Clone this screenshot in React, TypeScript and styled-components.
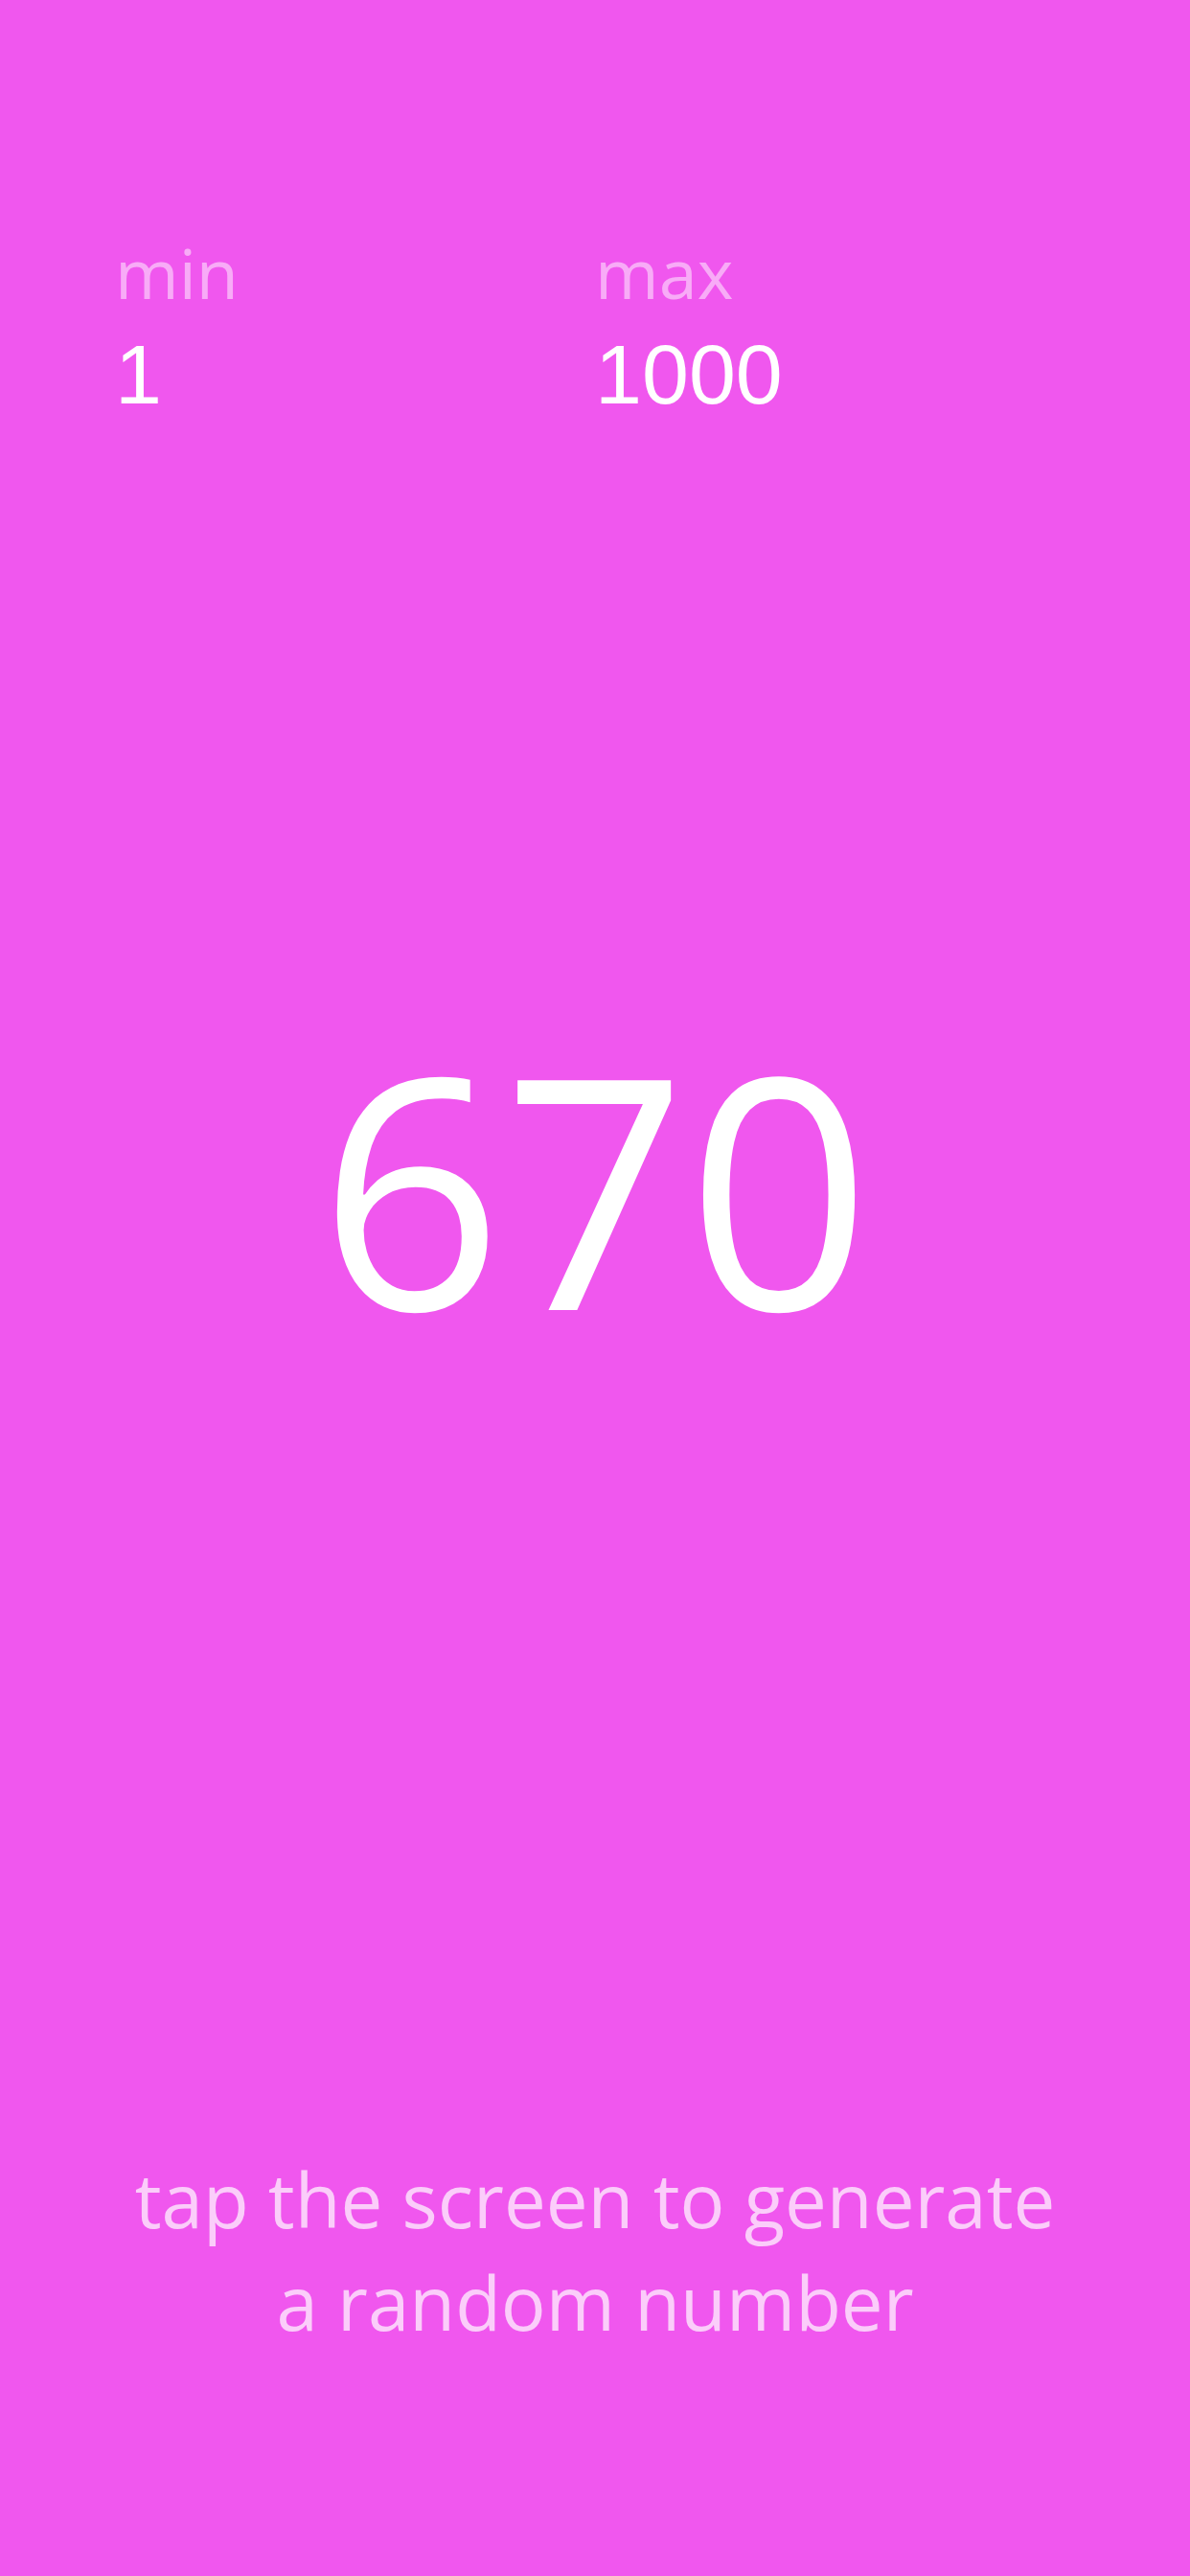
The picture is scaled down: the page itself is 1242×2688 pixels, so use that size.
import styled, { createGlobalStyle } from "styled-components"
import { useState } from "react"

const GlobalStyle = createGlobalStyle`
  html, body {
    margin: 0;
    padding: 0;
    background-color: #f057ee;
  }
`

const Screen = styled.div`
  height: 2688px;
  display: flex;
  flex-direction: column;
  background-color: #f057ee;
  font-family: "Open Sans", "Noto Sans", sans-serif;
  cursor: pointer;
  user-select: none;
`

const Limits = styled.div`
  display: flex;
  padding: 248px 120px 0;
`

const Limit = styled.div`
  flex: 1;
  display: flex;
  flex-direction: column;
  gap: 27px;
`

const Label = styled.span`
  font-size: 72px;
  line-height: 72px;
  color: rgba(255, 255, 255, 0.5);
`

const Value = styled.span`
  font-family: "Liberation Sans", Arial, sans-serif;
  font-size: 88px;
  line-height: 88px;
  color: #fff;
`

const Main = styled.div`
  flex: 1;
  display: flex;
  align-items: center;
  justify-content: center;
  padding-bottom: 203px;
`

const Result = styled.span`
  font-size: 336px;
  line-height: 336px;
  color: #fff;
`

const Hint = styled.p`
  margin: 0;
  padding: 0 0 232px;
  text-align: center;
  font-size: 78px;
  line-height: 107px;
  color: rgba(255, 255, 255, 0.7);
`

export default function App() {
  const min = 1
  const max = 1000

  // número atual mostrado no centro da tela
  const [value, setValue] = useState(670)

  function generate() {
    setValue(Math.floor(Math.random() * (max - min + 1)) + min)
  }

  return (
    <>
      <GlobalStyle />
      <Screen onClick={generate}>
        <Limits>
          <Limit>
            <Label>min</Label>
            <Value>{min}</Value>
          </Limit>
          <Limit>
            <Label>max</Label>
            <Value>{max}</Value>
          </Limit>
        </Limits>

        <Main>
          <Result>{value}</Result>
        </Main>

        <Hint>
          tap the screen to generate
          <br />
          a random number
        </Hint>
      </Screen>
    </>
  )
}
